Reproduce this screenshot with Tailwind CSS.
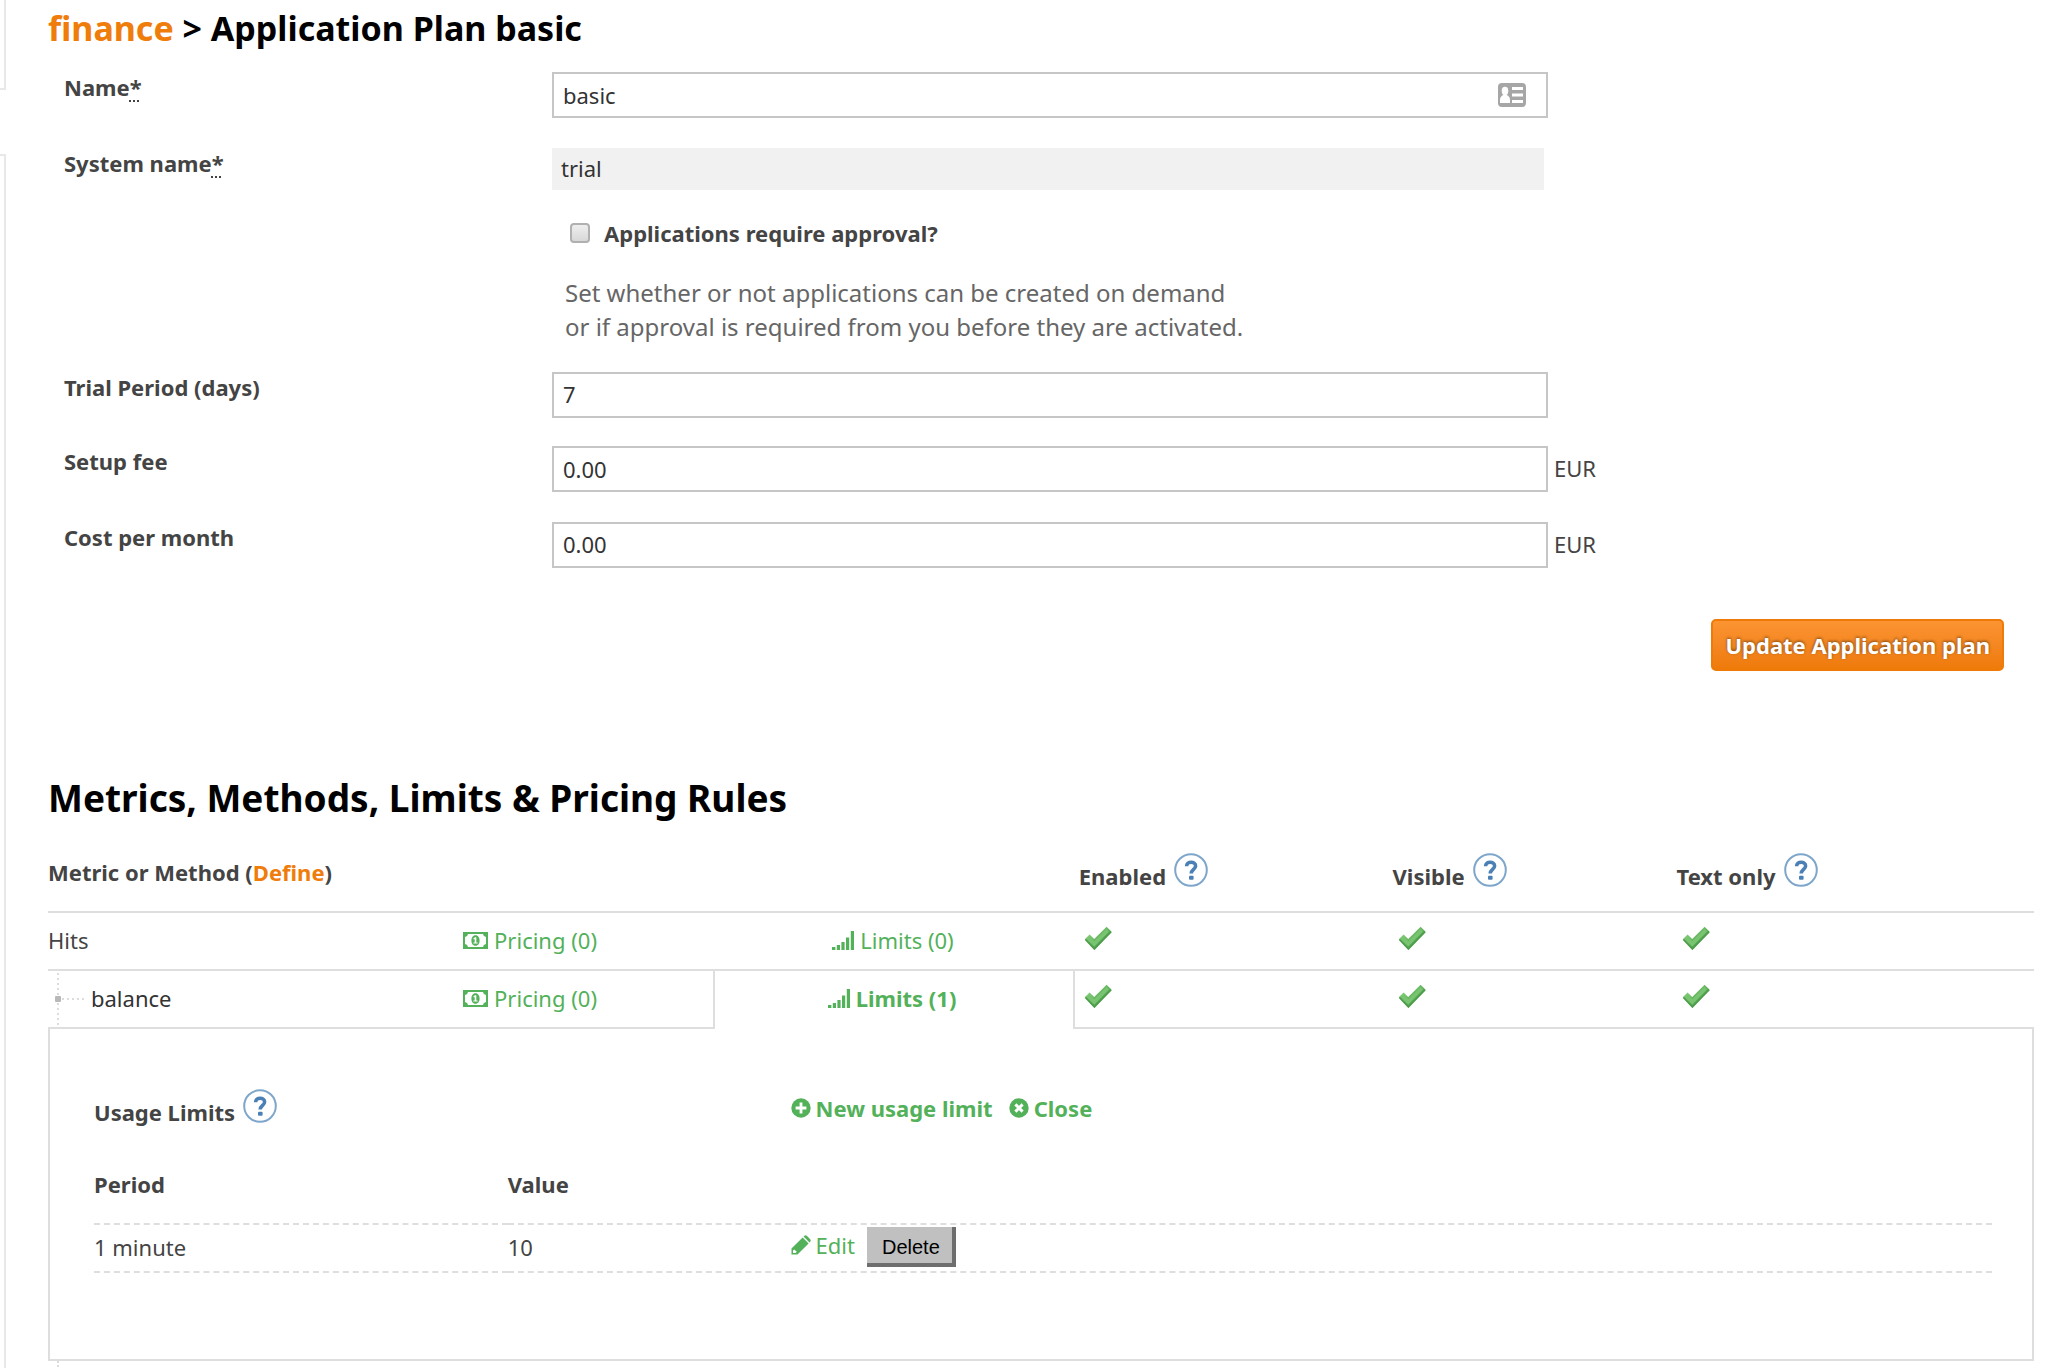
<!DOCTYPE html>
<html lang="en">
<head>
<meta charset="utf-8">
<title>Application Plan basic</title>
<script src="https://cdn.jsdelivr.net/npm/@tailwindcss/browser@4"></script>
</head>
<body class="bg-white font-['Noto_Sans','Open_Sans',sans-serif] text-[22px] leading-[30px] text-[#444]">
<svg class="absolute size-0" aria-hidden="true">
  <defs>
    <linearGradient id="tick-fill" x1="0" y1="0" x2="1" y2="1">
      <stop offset="0.3" stop-color="#7cc873"/><stop offset="0.75" stop-color="#479a45"/>
    </linearGradient>
  </defs>
  <symbol id="help" viewBox="0 0 34 34">
    <circle cx="17" cy="17" r="15.8" fill="#fff" stroke="#7ea6cb" stroke-width="2"/>
    <path d="M12.6 13.2C12.6 7.9 21.6 7.9 21.6 12.9C21.6 16.4 17.2 16.3 17.2 20.6" fill="none" stroke="#4a80b5" stroke-width="3.6"/>
    <rect x="15" y="22.8" width="4.6" height="4" rx="1" fill="#4a80b5"/>
  </symbol>
  <symbol id="tick" viewBox="0 0 28 24">
    <path d="M1 13L5.6 8.6L10.2 13L22.6 .8L27.4 5.4L10.4 23.4Z" fill="url(#tick-fill)"/>
    <path d="M3 13L5.6 10.6L10.2 15.2L22.6 3L25 5.4L10.3 20.4Z" fill="#78c470"/>
    <path d="M1.4 13.4L10.4 23L27.2 5.6" fill="none" stroke="#4d9c4b" stroke-width="1.6"/>
  </symbol>
  <symbol id="money" viewBox="0 0 25 17">
    <path fill-rule="evenodd" d="M0 0H25V17H0ZM5 2A3.4 3.4 0 0 1 2 5V12A3.4 3.4 0 0 1 5 15H20A3.4 3.4 0 0 1 23 12V5A3.4 3.4 0 0 1 20 2Z"/>
    <path fill-rule="evenodd" d="M12.5 3.2C15.3 3.2 16.6 5.8 16.6 8.5S15.3 13.8 12.5 13.8S8.4 11.2 8.4 8.5S9.7 3.2 12.5 3.2ZM11.9 5.2L10.2 6.7L11 7.6L11.7 7.1V10.4H10.4V11.6H14.6V10.4H13.3V5.2Z"/>
  </symbol>
  <symbol id="signal" viewBox="0 0 22 19">
    <path d="M0 16H3.4V19H0ZM4.8 14H8V19H4.8ZM9.4 11H12.6V19H9.4ZM14 6.4H17.2V19H14ZM18.8 0H22V19H18.8Z"/>
  </symbol>
  <symbol id="add" viewBox="0 0 20 20">
    <circle cx="10" cy="10" r="9.7"/><path d="M10 4.6V15.4M4.6 10H15.4" stroke="#fff" stroke-width="2.8"/>
  </symbol>
  <symbol id="close" viewBox="0 0 20 20">
    <circle cx="10" cy="10" r="9.7"/><path d="M6.4 6.4L13.6 13.6M13.6 6.4L6.4 13.6" stroke="#fff" stroke-width="3"/>
  </symbol>
  <symbol id="pencil" viewBox="0 0 20 20">
    <path fill-rule="evenodd" d="M.5 13.5L11.6 2.4L17.6 8.4L6.5 19.5H.5ZM2 15.6V18H4.6L5.8 16.8L3.2 14.4Z"/>
    <path d="M12.6 1.5L13.4 .7Q14.6 -.1 15.8 .8L19.2 4.2Q20.2 5.4 19.3 6.6L18.5 7.4Z"/>
  </symbol>
</svg>

<div class="flex min-h-screen">
  <div class="flex w-[6px] shrink-0 flex-col gap-16" aria-hidden="true">
    <div class="h-[90px] border-r-2 border-b-2 border-[#e8e8e8]"></div>
    <div class="flex-1 border-t-2 border-r-2 border-[#e8e8e8]"></div>
  </div>

  <main class="min-w-0 flex-1 pr-4 pl-[42px]">
    <h1 class="pt-2 text-[34px] leading-10 font-bold text-black"><a href="#" class="text-[#ef7d0b]">finance</a> &gt; Application Plan basic</h1>

    <form class="mt-6 pl-4">
      <div class="flex flex-col gap-7">
        <div class="grid grid-cols-[488fr_996fr_486fr] pb-0.5">
          <label for="name" class="font-bold">Name<abbr title="required" class="underline decoration-dotted decoration-2 underline-offset-4">*</abbr></label>
          <div class="flex h-[46px] items-center border-2 border-[#c6c6c6] pr-5">
            <input id="name" type="text" value="basic" class="h-full min-w-0 flex-1 px-[9px] text-[#333] outline-none">
            <svg viewBox="0 0 28 24" class="h-6 w-7" aria-hidden="true">
              <rect width="28" height="24" rx="4" fill="#a6a6a6"/>
              <g fill="#fff"><ellipse cx="7" cy="8" rx="3.3" ry="4.2"/><path d="M2 20V17Q2 13.4 5.4 12H8.6Q12 13.4 12 17V20ZM14 4H25V7H14ZM14 10.6H25V13.6H14ZM14 17H25V20H14Z"/></g>
            </svg>
          </div>
        </div>
        <div class="grid grid-cols-[488fr_996fr_486fr]">
          <label for="system-name" class="font-bold">System name<abbr title="required" class="underline decoration-dotted decoration-2 underline-offset-4">*</abbr></label>
          <div class="pr-1"><input id="system-name" type="text" readonly value="trial" class="block h-[42px] w-full bg-[#f1f1f1] px-[9px] pb-0.5 text-[#333] outline-none"></div>
        </div>
        <div class="grid grid-cols-[488fr_1482fr]">
          <div class="col-start-2">
            <label class="flex items-center gap-3.5 pl-[18px] font-bold"><input type="checkbox" class="size-5 appearance-none rounded-[4px] border-2 border-[#b0b0b0] bg-linear-to-b from-[#eee] to-[#d8d8d8]">Applications require approval?</label>
            <p class="mt-7 pl-[13px] text-[24px] leading-[34px] text-[#666]">Set whether or not applications can be created on demand<br>or if approval is required from you before they are activated.</p>
          </div>
        </div>
        <div class="grid grid-cols-[488fr_996fr_486fr]">
          <label for="trial" class="font-bold">Trial Period (days)</label>
          <input id="trial" type="text" value="7" class="h-[46px] min-w-0 border-2 border-[#c6c6c6] px-[9px] pb-0.5 text-[#333] outline-none">
        </div>
        <div class="grid grid-cols-[488fr_996fr_486fr] pb-0.5">
          <label for="setup" class="font-bold">Setup fee</label>
          <input id="setup" type="text" value="0.00" class="h-[46px] min-w-0 border-2 border-[#c6c6c6] px-[9px] text-[#333] outline-none">
          <span class="self-center pb-0.5 pl-1.5">EUR</span>
        </div>
        <div class="grid grid-cols-[488fr_996fr_486fr]">
          <label for="cost" class="font-bold">Cost per month</label>
          <input id="cost" type="text" value="0.00" class="h-[46px] min-w-0 border-2 border-[#c6c6c6] px-[9px] pb-0.5 text-[#333] outline-none">
          <span class="self-center pb-0.5 pl-1.5">EUR</span>
        </div>
      </div>
      <div class="mt-[51px] flex justify-end pr-[30px]">
        <button type="submit" class="h-[52px] rounded-[5px] border-2 border-[#ee7b08] bg-linear-to-b from-[#fb9431] to-[#ee7a08] px-3 font-bold text-white text-shadow-[0_-1px_3px_rgb(0_0_0/0.5)]">Update Application plan</button>
      </div>
    </form>

    <h2 class="mt-[103px] text-[37px] leading-[47px] font-bold text-black">Metrics, Methods, Limits &amp; Pricing Rules</h2>

    <table class="w-full table-fixed border-separate border-spacing-0 text-left">
      <colgroup>
        <col class="w-[20.9%]"><col class="w-[12.7%]"><col class="w-[18.1%]"><col class="w-[15.8%]"><col class="w-[14.3%]"><col>
      </colgroup>
      <thead>
        <tr class="h-[92px] align-bottom">
          <th colspan="3" class="border-b-2 border-[#dedede] pb-6 font-bold">Metric or Method (<a href="#" class="text-[#ef7d0b]">Define</a>)</th>
          <th class="border-b-2 border-[#dedede] pb-5 pl-1 font-bold"><span class="flex items-end gap-2">Enabled<svg class="mb-1 size-[34px]"><use href="#help"/></svg></span></th>
          <th class="border-b-2 border-[#dedede] pb-5 pl-1 font-bold"><span class="flex items-end gap-2">Visible<svg class="mb-1 size-[34px]"><use href="#help"/></svg></span></th>
          <th class="border-b-2 border-[#dedede] pb-5 pl-1 font-bold"><span class="flex items-end gap-2">Text only<svg class="mb-1 size-[34px]"><use href="#help"/></svg></span></th>
        </tr>
      </thead>
      <tbody>
        <tr class="h-[58px]">
          <td class="border-b-2 border-[#dedede] pb-0.5">Hits</td>
          <td class="border-b-2 border-[#dedede] pb-0.5"><a href="#" class="flex items-center gap-1.5 text-[#53b15a]"><svg class="h-[17px] w-[25px] fill-current"><use href="#money"/></svg>Pricing (0)</a></td>
          <td class="border-b-2 border-[#dedede] pr-1 pb-0.5"><a href="#" class="flex items-center justify-center gap-1.5 text-[#53b15a]"><svg class="h-[19px] w-[22px] fill-current"><use href="#signal"/></svg>Limits (0)</a></td>
          <td class="border-b-2 border-[#dedede] pb-1.5 pl-[9px]"><svg class="h-6 w-7" role="img" aria-label="yes"><use href="#tick"/></svg></td>
          <td class="border-b-2 border-[#dedede] pb-1.5 pl-[9px]"><svg class="h-6 w-7" role="img" aria-label="yes"><use href="#tick"/></svg></td>
          <td class="border-b-2 border-[#dedede] pb-1.5 pl-[9px]"><svg class="h-6 w-7" role="img" aria-label="yes"><use href="#tick"/></svg></td>
        </tr>
        <tr class="h-[58px]">
          <td class="border-b-2 border-[#dedede] text-[#333]">
            <span class="flex items-center gap-[5px]">
              <svg viewBox="0 0 38 56" class="h-14 w-[38px]" aria-hidden="true"><path d="M10 2V56M14 28H38" stroke="#dcdcdc" stroke-width="2" stroke-dasharray="2 3"/><rect x="7" y="25" width="6" height="6" rx="1" fill="#b8b8b8"/></svg>
              <span class="pb-0.5">balance</span>
            </span>
          </td>
          <td class="border-r-2 border-b-2 border-[#dedede] pb-0.5"><a href="#" class="flex items-center gap-1.5 text-[#53b15a]"><svg class="h-[17px] w-[25px] fill-current"><use href="#money"/></svg>Pricing (0)</a></td>
          <td class="border-r-2 border-[#dedede] pr-1 pb-1"><a href="#" class="flex items-center justify-center gap-1.5 font-bold text-[#53b15a]"><svg class="h-[19px] w-[22px] fill-current"><use href="#signal"/></svg>Limits (1)</a></td>
          <td class="border-b-2 border-[#dedede] pb-1.5 pl-[9px]"><svg class="h-6 w-7" role="img" aria-label="yes"><use href="#tick"/></svg></td>
          <td class="border-b-2 border-[#dedede] pb-1.5 pl-[9px]"><svg class="h-6 w-7" role="img" aria-label="yes"><use href="#tick"/></svg></td>
          <td class="border-b-2 border-[#dedede] pb-1.5 pl-[9px]"><svg class="h-6 w-7" role="img" aria-label="yes"><use href="#tick"/></svg></td>
        </tr>
        <tr>
          <td colspan="6" class="border-x-2 border-b-2 border-[#dedede] pt-[60px] pr-10 pb-[86px] pl-11">
            <table class="w-full table-fixed border-separate border-spacing-0 text-left">
              <colgroup><col class="w-[21.8%]"><col class="w-[14.9%]"><col></colgroup>
              <thead>
                <tr class="h-[78px] align-top">
                  <th colspan="2" class="font-bold"><span class="flex items-start gap-2"><span class="pt-2">Usage Limits</span><svg class="size-[34px]"><use href="#help"/></svg></span></th>
                  <td class="pt-1"><span class="flex gap-4 font-bold text-[#53b15a]"><a href="#" class="flex items-center gap-[5px]"><svg class="size-5 fill-current"><use href="#add"/></svg>New usage limit</a><a href="#" class="flex items-center gap-[5px]"><svg class="size-5 fill-current"><use href="#close"/></svg>Close</a></span></td>
                </tr>
                <tr class="h-[58px] align-top">
                  <th class="border-b-2 border-dashed border-[#dedede] pt-0.5 font-bold">Period</th>
                  <th class="border-b-2 border-dashed border-[#dedede] pt-0.5 font-bold">Value</th>
                  <td class="border-b-2 border-dashed border-[#dedede]"></td>
                </tr>
              </thead>
              <tbody>
                <tr class="h-12">
                  <td class="border-b-2 border-dashed border-[#dedede] pb-0.5">1 minute</td>
                  <td class="border-b-2 border-dashed border-[#dedede] pb-0.5">10</td>
                  <td class="border-b-2 border-dashed border-[#dedede] pb-0.5"><span class="flex items-center gap-3"><a href="#" class="flex items-center gap-[5px] pb-1 text-[#53b15a]"><svg class="size-5 fill-current"><use href="#pencil"/></svg>Edit</a><button type="button" class="h-10 border-r-4 border-b-4 border-[#6e6e6e] bg-[#c0c0c0] pt-1 pr-3 pl-[15px] font-['Liberation_Sans',Arial,sans-serif] text-[20px] leading-6 text-black">Delete</button></span></td>
                </tr>
              </tbody>
            </table>
          </td>
        </tr>
        <tr>
          <td colspan="6" class="pl-2"><svg viewBox="0 0 4 6" class="h-1.5 w-1" aria-hidden="true"><path d="M2 0V6" stroke="#dcdcdc" stroke-width="2" stroke-dasharray="2 2"/></svg></td>
        </tr>
      </tbody>
    </table>
  </main>
</div>
</body>
</html>
